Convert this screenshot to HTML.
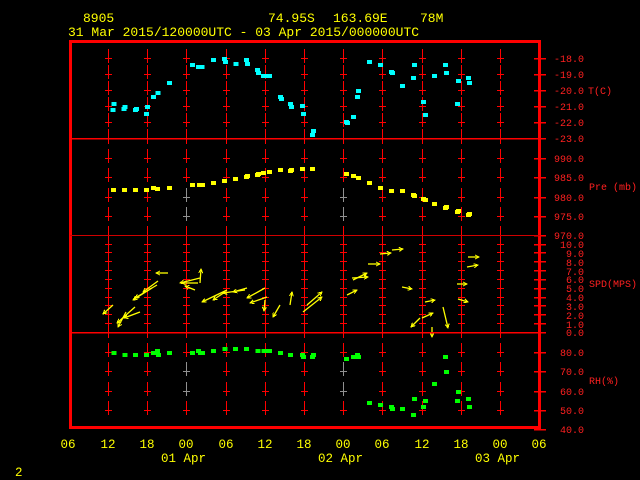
<!DOCTYPE html>
<html><head><meta charset="utf-8"><style>
html,body{margin:0;padding:0;background:#000;}
svg{display:block}
text{font-family:"Liberation Mono",monospace;}
</style></head><body>
<svg id="s" width="640" height="480" xmlns="http://www.w3.org/2000/svg" shape-rendering="crispEdges">
<defs>
<marker id="ah" viewBox="0 0 10 10" refX="9" refY="5" markerWidth="5" markerHeight="5" orient="auto" markerUnits="userSpaceOnUse">
<polyline points="1,1 9,5 1,9" fill="none" stroke="#ffff00" stroke-width="2"/>
</marker>
</defs>
<rect width="640" height="480" fill="#000"/>
<g id="grid"></g>
<g id="data"></g>
<g id="wind" stroke="#ffff00" stroke-width="1.3" fill="none" shape-rendering="auto"></g>
<g fill="none" stroke="#ff0000">
<rect x="70.5" y="41.5" width="469" height="386" stroke-width="3"/>
<line x1="70" y1="138.5" x2="540" y2="138.5" stroke-width="1.5"/>
<line x1="70" y1="235.5" x2="540" y2="235.5" stroke-width="1" stroke="#d00000"/>
<line x1="70" y1="332.5" x2="540" y2="332.5" stroke-width="1.5"/>
</g>
<g fill="#ffff00" font-size="13">
<text x="83" y="22">8905</text>
<text x="268" y="22">74.95S</text>
<text x="333" y="22">163.69E</text>
<text x="420" y="22">78M</text>
<text x="68" y="36">31 Mar 2015/120000UTC - 03 Apr 2015/000000UTC</text>
</g>
<g fill="#ff2020" font-size="10" text-anchor="end">
<text x="584" y="62">-18.0</text><text x="584" y="78">-19.0</text><text x="584" y="94">-20.0</text>
<text x="584" y="110">-21.0</text><text x="584" y="126">-22.0</text><text x="584" y="142">-23.0</text>
<text x="584" y="162">990.0</text><text x="584" y="181">985.0</text><text x="584" y="201">980.0</text>
<text x="584" y="220">975.0</text><text x="584" y="239">970.0</text>
<text x="584" y="248">10.0</text><text x="584" y="257">9.0</text><text x="584" y="266">8.0</text>
<text x="584" y="275">7.0</text><text x="584" y="283">6.0</text><text x="584" y="292">5.0</text>
<text x="584" y="301">4.0</text><text x="584" y="310">3.0</text><text x="584" y="319">2.0</text>
<text x="584" y="328">1.0</text><text x="584" y="336">0.0</text>
<text x="584" y="356">80.0</text><text x="584" y="375">70.0</text><text x="584" y="395">60.0</text>
<text x="584" y="414">50.0</text><text x="584" y="433">40.0</text>
</g>
<g fill="#ff2020" font-size="10">
<text x="588" y="94">T(C)</text>
<text x="589" y="190">Pre (mb)</text>
<text x="589" y="287">SPD(MPS)</text>
<text x="589" y="384">RH(%)</text>
</g>
<g fill="#ffff00" font-size="12.5" text-anchor="middle">
<text x="68" y="448">06</text><text x="108" y="448">12</text><text x="147" y="448">18</text>
<text x="186" y="448">00</text><text x="226" y="448">06</text><text x="265" y="448">12</text>
<text x="304" y="448">18</text><text x="343" y="448">00</text><text x="382" y="448">06</text>
<text x="422" y="448">12</text><text x="461" y="448">18</text><text x="500" y="448">00</text>
<text x="539" y="448">06</text>
</g>
<g fill="#ffff00" font-size="12.5">
<text x="161" y="462">01 Apr</text>
<text x="318" y="462">02 Apr</text>
<text x="475" y="462">03 Apr</text>
<text x="15" y="476">2</text>
</g>
</svg>
<script>
var NS="http://www.w3.org/2000/svg";
function el(p,n,a){var e=document.createElementNS(NS,n);for(var k in a)e.setAttribute(k,a[k]);p.appendChild(e);return e;}
var g=document.getElementById('grid'),d=document.getElementById('data'),w=document.getElementById('wind');
var xs=[108,147,186,226,265,304,343,382,422,461,500];
function cross(x,y,c){el(g,'line',{x1:x+.5,y1:y-9,x2:x+.5,y2:y+5,stroke:c,'stroke-width':1});el(g,'line',{x1:x-3,y1:y+.5,x2:x+4,y2:y+.5,stroke:c,'stroke-width':1});}
var tr=[58,74,90,106,122],pr=[158,177,197,216],rr=[352,371,391,410];
xs.forEach(function(x){
 tr.forEach(function(y){cross(x,y,'#ff0000');});
 el(g,'line',{x1:x+.5,y1:129,x2:x+.5,y2:138,stroke:'#ff0000'});
 el(g,'line',{x1:x+.5,y1:138,x2:x+.5,y2:144,stroke:'#ff0000'});
 pr.forEach(function(y,i){var c=((x==186||x==343)&&i>=2)?'#909090':'#ff0000';cross(x,y,c);});
 el(g,'line',{x1:x+.5,y1:226,x2:x+.5,y2:241,stroke:'#ff0000'});
 el(g,'line',{x1:x+.5,y1:235,x2:x+.5,y2:338,stroke:'#ff0000'});
 for(var u=1;u<=10;u++){var y=Math.round(332-u*8.85);el(g,'line',{x1:x-3,y1:y+.5,x2:x+4,y2:y+.5,stroke:'#ff0000'});}
 rr.forEach(function(y,i){var c=((x==186||x==343)&&(i==1||i==2))?'#909090':'#ff0000';cross(x,y,c);});
});
// right axis ticks
[58,74,90,106,122,138,158,177,197,216,235,332,352,371,391,410,429].forEach(function(y){el(g,'line',{x1:534,y1:y+.5,x2:546,y2:y+.5,stroke:'#ff0000','stroke-width':1.5});});
for(var u=1;u<=10;u++){var y=Math.round(332-u*8.85);el(g,'line',{x1:534,y1:y+.5,x2:546,y2:y+.5,stroke:'#ff0000','stroke-width':1.5});}
function pts(a,c){for(var i=0;i<a.length;i+=2)el(d,'rect',{x:a[i]-2,y:a[i+1]-2,width:5,height:4,fill:c});}
pts([113.5,104,112.6,110,124.5,107,123.7,109,136,109,135,110,147,107,146,114,153,97,157.5,93,169,83,192,65,198,67,201.6,67,213,60,224,59,225,62,235.5,64,246,60,247,64,257,70,258,73,263,76,266,76,269,76,280,97,281,99,290,104,291,107,302,106,303,114,313,131,312,135,346,122,347,123,353,117,357,97,358,91,369,62,380,65,391,72,392,73,402,86,413,78,414,65,423,102,425,115,434,76,445,65,446,73,457,104,458,81,468,78,469,83],'#00ffff');
pts([113,190,124,190,135,190,146,190,153,188,157,189,169,188,192,185,199,185,202,185,213,183,224,181,235,179,246,177,247,176,257,175,258,174,263,173,269,172,280,170,290,171,291,170,302,169,312,169,346,174,353,176,358,178,369,183,380,188,391,191,402,191,413,195,414,196,423,199,425,200,434,204,445,208,446,207,457,212,458,211,468,215,469,214],'#ffff00');
pts([113.6,353,124.6,355,135,355,146,355,153,353,157,351,158,355,169,353,192,353,198,351,200,353,202,353,213,351,224.6,349,235,349,246,349,257.5,351,263.5,351,266,351,269,351,280,353,290,355,302,355,303,357,312,357,313,355,346,359,353,357,357,355,358,357,369,403,380,405,391,407,392,409,402,409,413,415,414,399,423,407,425,401,434,384,445,357,446,372,457,401,458,392,468,399,469,407],'#00ff00');
var A=[[113,305,103,314],[135,307,117,323],[126,312,118,327],[140,312,124,318],[157,285,135,298],[152,288,133,300],[158,281,143,292],[168,273,156,273],[200,278,180,283],[198,283,182,283],[200,283,201,269],[195,290,185,286],[227,290,202,302],[225,292,213,300],[245,290,223,293],[247,288,233,292],[265,288,247,298],[267,297,250,303],[265,300,264,311],[280,305,273,317],[290,305,292,292],[303,312,322,297],[307,305,322,292],[347,295,357,290],[353,280,367,273],[352,278,368,277],[368,264,380,264],[380,254,391,253],[392,250,403,249],[402,287,412,289],[425,302,435,300],[422,318,433,313],[420,318,411,327],[443,307,448,328],[432,327,432,337],[457,284,467,284],[458,299,468,302],[468,257,479,257],[467,267,478,265]];
A.forEach(function(a){el(w,'line',{x1:a[0],y1:a[1],x2:a[2],y2:a[3],'marker-end':'url(#ah)'});});
</script>
</body></html>
